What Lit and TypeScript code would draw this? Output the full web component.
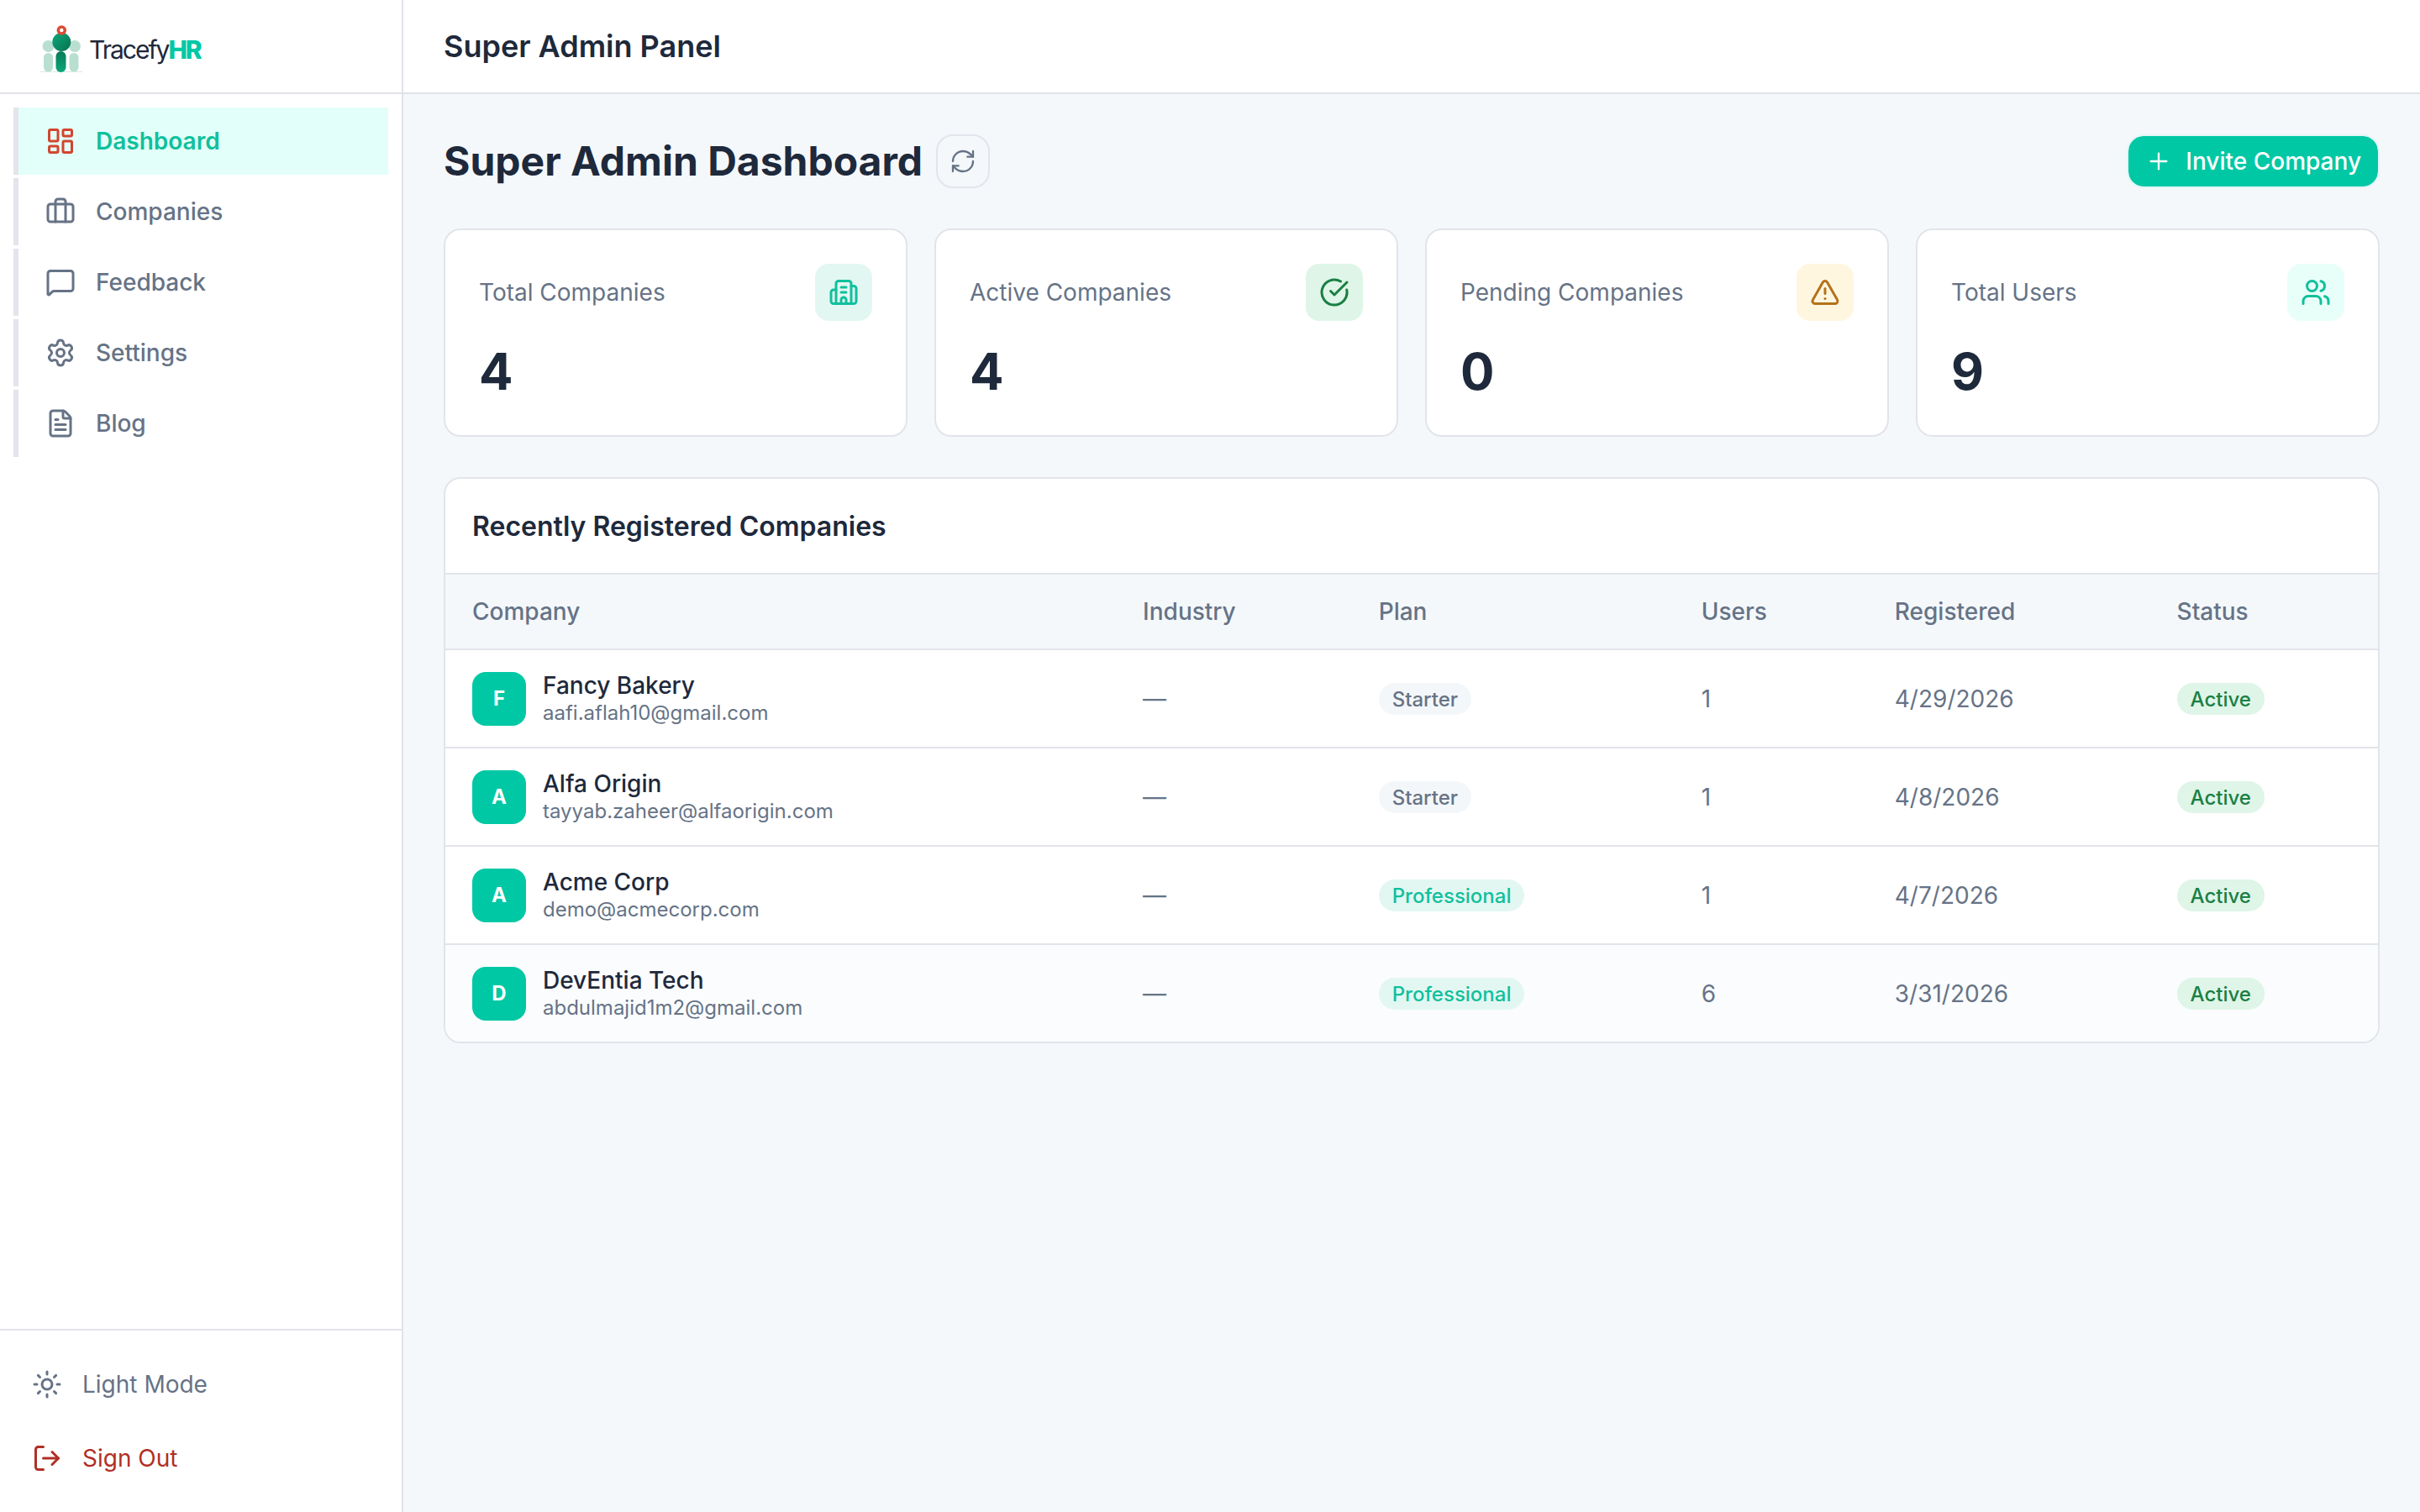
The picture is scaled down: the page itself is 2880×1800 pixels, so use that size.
import { LitElement, html, css, svg, nothing } from "lit";
import { customElement, property } from "lit/decorators.js";
import { classMap } from "lit/directives/class-map.js";

const ICONS: Record<string, unknown> = {
  dashboard: svg`<rect width="7" height="9" x="3" y="3" rx="1"/><rect width="7" height="5" x="14" y="3" rx="1"/><rect width="7" height="9" x="14" y="12" rx="1"/><rect width="7" height="5" x="3" y="16" rx="1"/>`,
  briefcase: svg`<path d="M16 20V4a2 2 0 0 0-2-2h-4a2 2 0 0 0-2 2v16"/><rect width="20" height="14" x="2" y="6" rx="2"/>`,
  message: svg`<path d="M22 17a2 2 0 0 1-2 2H6.828a2 2 0 0 0-1.414.586l-2.202 2.202A.71.71 0 0 1 2 21.286V5a2 2 0 0 1 2-2h16a2 2 0 0 1 2 2z"/>`,
  settings: svg`<path d="M9.671 4.136a2.34 2.34 0 0 1 4.659 0 2.34 2.34 0 0 0 3.319 1.915 2.34 2.34 0 0 1 2.33 4.033 2.34 2.34 0 0 0 0 3.831 2.34 2.34 0 0 1-2.33 4.033 2.34 2.34 0 0 0-3.319 1.915 2.34 2.34 0 0 1-4.659 0 2.34 2.34 0 0 0-3.32-1.915 2.34 2.34 0 0 1-2.33-4.033 2.34 2.34 0 0 0 0-3.831A2.34 2.34 0 0 1 6.35 6.051a2.34 2.34 0 0 0 3.319-1.915"/><circle cx="12" cy="12" r="3"/>`,
  file: svg`<path d="M6 22a2 2 0 0 1-2-2V4a2 2 0 0 1 2-2h8a2.4 2.4 0 0 1 1.704.706l3.588 3.588A2.4 2.4 0 0 1 20 8v12a2 2 0 0 1-2 2z"/><path d="M14 2v5a1 1 0 0 0 1 1h5"/><path d="M10 9H8"/><path d="M16 13H8"/><path d="M16 17H8"/>`,
  sun: svg`<circle cx="12" cy="12" r="4"/><path d="M12 2v2"/><path d="M12 20v2"/><path d="m4.93 4.93 1.41 1.41"/><path d="m17.66 17.66 1.41 1.41"/><path d="M2 12h2"/><path d="M20 12h2"/><path d="m6.34 17.66-1.41 1.41"/><path d="m19.07 4.93-1.41 1.41"/>`,
  logout: svg`<path d="m16 17 5-5-5-5"/><path d="M21 12H9"/><path d="M9 21H5a2 2 0 0 1-2-2V5a2 2 0 0 1 2-2h4"/>`,
  refresh: svg`<path d="M3 12a9 9 0 0 1 9-9 9.75 9.75 0 0 1 6.74 2.74L21 8"/><path d="M21 3v5h-5"/><path d="M21 12a9 9 0 0 1-9 9 9.75 9.75 0 0 1-6.74-2.74L3 16"/><path d="M8 16H3v5"/>`,
  plus: svg`<path d="M5 12h14"/><path d="M12 5v14"/>`,
  building: svg`<path d="M10 12h4"/><path d="M10 8h4"/><path d="M14 21v-3a2 2 0 0 0-4 0v3"/><path d="M6 10H4a2 2 0 0 0-2 2v7a2 2 0 0 0 2 2h16a2 2 0 0 0 2-2V9a2 2 0 0 0-2-2h-2"/><path d="M6 21V5a2 2 0 0 1 2-2h8a2 2 0 0 1 2 2v16"/>`,
  check: svg`<path d="M21.801 10A10 10 0 1 1 17 3.335"/><path d="m9 11 3 3L22 4"/>`,
  alert: svg`<path d="m21.73 18-8-14a2 2 0 0 0-3.48 0l-8 14A2 2 0 0 0 4 21h16a2 2 0 0 0 1.73-3"/><path d="M12 9v4"/><path d="M12 17h.01"/>`,
  users: svg`<path d="M16 21v-2a4 4 0 0 0-4-4H6a4 4 0 0 0-4 4v2"/><path d="M16 3.128a4 4 0 0 1 0 7.744"/><path d="M22 21v-2a4 4 0 0 0-3-3.87"/><circle cx="9" cy="7" r="4"/>`,
};

@customElement("line-icon")
export class LineIcon extends LitElement {
  @property() name = "";
  @property() weight = "2";
  static styles = css`
    :host { display: block; width: 36px; height: 36px; flex: none; }
    .glyph { display: block; width: 100%; height: 100%; }
  `;
  render() {
    return html`<svg class="glyph" viewBox="0 0 24 24" fill="none" stroke="currentColor" stroke-width=${this.weight}
      stroke-linecap="round" stroke-linejoin="round" aria-hidden="true">${ICONS[this.name] ?? nothing}</svg>`;
  }
}

const NAV = [
  { label: "Dashboard", icon: "dashboard", active: true },
  { label: "Companies", icon: "briefcase", active: false },
  { label: "Feedback", icon: "message", active: false },
  { label: "Settings", icon: "settings", active: false },
  { label: "Blog", icon: "file", active: false },
];

@customElement("side-bar")
export class SideBar extends LitElement {
  static styles = css`
    :host { display: flex; flex-direction: column; background: #fff; border-right: 2px solid #e2e2ea; }
    .brand { display: flex; align-items: center; gap: 8px; height: 112px; padding: 8px 48px 0; box-sizing: border-box;
      border-bottom: 2px solid #e2e2ea; text-decoration: none; flex: none; }
    .mark { width: 50px; height: 58px; flex: none; }
    .word { font-size: 30px; line-height: 40px; letter-spacing: -2px; color: #1e293b; }
    .accent { font-weight: 800; color: #00c8a5; }
    .nav { display: flex; flex-direction: column; gap: 4px; padding: 16px; flex: 1; }
    .link { display: flex; align-items: center; gap: 24px; height: 80px; padding: 0 32px; border-left: 6px solid #e4e4ec;
      color: #667386; font-size: 28px; font-weight: 500; text-decoration: none; }
    .active { background: #e3fff9; color: #0fc19c; font-weight: 600; }
    .active line-icon { color: #d2452f; }
    .foot { display: flex; flex-direction: column; gap: 8px; padding: 24px; border-top: 2px solid #e2e2ea; }
    .action { display: flex; align-items: center; gap: 24px; height: 80px; padding: 0 14px; border: 0; background: none;
      font: inherit; font-size: 28px; color: #667386; text-align: left; cursor: pointer; }
    .danger { color: #b02f26; }
  `;
  render() {
    return html`
      <a class="brand" href="#">
        <svg class="mark" viewBox="0 0 50 58" aria-hidden="true">
          <defs>
            <linearGradient id="body" x1="0" y1="0" x2="1" y2="1">
              <stop offset="0" stop-color="#0ea97c"/><stop offset="1" stop-color="#06704f"/>
            </linearGradient>
            <linearGradient id="limb" x1="0" y1="0" x2="0" y2="1">
              <stop offset="0" stop-color="#077a58"/><stop offset="1" stop-color="#0ca67a"/>
            </linearGradient>
          </defs>
          <g fill="#b9dfd0">
            <circle cx="9.500" cy="25" r="7"/><circle cx="41" cy="25" r="7"/>
            <rect x="4" y="33" width="11" height="22.500" rx="5.500"/><rect x="34.500" y="33" width="11" height="22.500" rx="5.500"/>
          </g>
          <rect x="0" y="55" width="50" height="1" fill="#d9e9e3"/>
          <circle cx="25.300" cy="20" r="11" fill="url(#body)"/>
          <rect x="18.500" y="31" width="12" height="25" rx="6" fill="url(#limb)"/>
          <circle cx="25.300" cy="6" r="4" fill="#fff" stroke="#dc4a33" stroke-width="3.500"/>
        </svg>
        <span class="word">Tracefy<span class="accent">HR</span></span>
      </a>
      <nav class="nav" aria-label="Main">
        ${NAV.map((n) => html`<a href="#" class=${classMap({ link: true, active: n.active })}><line-icon name=${n.icon}></line-icon>${n.label}</a>`)}
      </nav>
      <div class="foot">
        <button class="action" type="button"><line-icon name="sun"></line-icon>Light Mode</button>
        <button class="action danger" type="button"><line-icon name="logout"></line-icon>Sign Out</button>
      </div>
    `;
  }
}

@customElement("stat-card")
export class StatCard extends LitElement {
  @property() label = "";
  @property() value = "";
  @property() icon = "";
  @property() tone = "";
  static styles = css`
    :host { display: flex; flex-direction: column; gap: 24px; padding: 40px; border: 2px solid #e2e4ea; border-radius: 20px; background: #fff; }
    .top { display: flex; align-items: center; justify-content: space-between; color: #667386; font-size: 28px; }
    .tile { display: grid; place-items: center; width: 68px; height: 68px; border-radius: 16px; }
    .brand { background: #e3f7f2; color: #10c09c; }
    .success { background: #def5e8; color: #1a7f43; }
    .warning { background: #fff6e0; color: #b4721a; }
    .mint { background: #e8fff9; color: #10c09c; }
    .value { font-size: 60px; line-height: 72px; font-weight: 700; color: #1e293b; }
  `;
  render() {
    return html`
      <div class="top"><span>${this.label}</span>
        <span class=${classMap({ tile: true, [this.tone]: true })}><line-icon name=${this.icon}></line-icon></span></div>
      <div class="value">${this.value}</div>
    `;
  }
}

const COMPANIES = [
  { name: "Fancy Bakery", email: "aafi.aflah10@gmail.com", plan: "Starter", users: 1, date: "4/29/2026" },
  { name: "Alfa Origin", email: "tayyab.zaheer@alfaorigin.com", plan: "Starter", users: 1, date: "4/8/2026" },
  { name: "Acme Corp", email: "demo@acmecorp.com", plan: "Professional", users: 1, date: "4/7/2026" },
  { name: "DevEntia Tech", email: "abdulmajid1m2@gmail.com", plan: "Professional", users: 6, date: "3/31/2026", hover: true },
];

@customElement("company-table")
export class CompanyTable extends LitElement {
  static styles = css`
    :host { display: block; border: 2px solid #e2e4ea; border-radius: 20px; background: #fff; overflow: hidden; }
    .title { margin: 0; padding: 2px 32px 0; font-size: 32px; line-height: 110px; font-weight: 600; color: #1e293b; }
    .table { width: 100%; table-layout: fixed; border-collapse: separate; border-spacing: 0; font-size: 28px; color: #667386; }
    .c-company { width: 34.7%; }
    .c-industry { width: 12.2%; }
    .c-plan { width: 16.7%; }
    .c-users { width: 10%; }
    .c-date { width: 14.6%; }
    .head { height: 90px; padding: 0 32px; box-sizing: border-box; text-align: left; font-weight: 500; background: #f4f8fb;
      border-top: 2px solid #e2e4ea; }
    .cell { height: 117px; padding: 0 32px; box-sizing: border-box; border-top: 2px solid #e2e4ea; }
    .hover .cell { background: #fafcfd; }
    .who { display: flex; align-items: center; gap: 20px; }
    .avatar { display: grid; place-items: center; width: 64px; height: 64px; border-radius: 16px; background: #00c8a5;
      color: #fff; font-size: 24px; font-weight: 700; flex: none; }
    .name { font-weight: 500; line-height: 34px; color: #1e293b; }
    .email { font-size: 24px; line-height: 32px; }
    .badge { display: inline-block; padding: 2px 16px 0; border-radius: 19px; font-size: 24px; line-height: 36px; font-weight: 500;
      vertical-align: middle; background: #f4f7fa; }
    .pro { background: #e3f7f2; color: #10c09c; }
    .ok { background: #def5e8; color: #1a7f43; }
  `;
  render() {
    return html`
      <h2 class="title">Recently Registered Companies</h2>
      <table class="table">
        <colgroup><col class="c-company"><col class="c-industry"><col class="c-plan"><col class="c-users"><col class="c-date"><col></colgroup>
        <thead><tr>${["Company", "Industry", "Plan", "Users", "Registered", "Status"].map((h) => html`<th class="head" scope="col">${h}</th>`)}</tr></thead>
        <tbody>
          ${COMPANIES.map((c) => html`<tr class=${classMap({ hover: !!c.hover })}>
            <td class="cell"><div class="who"><span class="avatar">${c.name[0]}</span>
              <div><div class="name">${c.name}</div><div class="email">${c.email}</div></div></div></td>
            <td class="cell">—</td>
            <td class="cell"><span class=${classMap({ badge: true, pro: c.plan === "Professional" })}>${c.plan}</span></td>
            <td class="cell">${c.users}</td>
            <td class="cell">${c.date}</td>
            <td class="cell"><span class="badge ok">Active</span></td>
          </tr>`)}
        </tbody>
      </table>
    `;
  }
}

@customElement("app-root")
export class AppRoot extends LitElement {
  static styles = css`
    :host { display: grid; grid-template-columns: 480px minmax(0, 1fr); min-height: 100vh; background: #f4f8fb;
      font-family: Inter, "Liberation Sans", sans-serif; }
    .bar { display: flex; align-items: center; height: 110px; padding: 0 48px; border-bottom: 2px solid #e2e2ea; background: #fff;
      font-size: 36px; font-weight: 600; color: #1e293b; }
    .content { display: flex; flex-direction: column; gap: 48px; padding: 48px; }
    .heading { display: flex; align-items: center; gap: 16px; }
    .title { margin: 0; font-size: 48px; line-height: 64px; font-weight: 700; color: #1e293b; }
    .refresh { display: grid; place-items: center; width: 64px; height: 64px; padding: 0; border: 2px solid #e2e6ec; border-radius: 20px;
      background: none; color: #667386; cursor: pointer; }
    .invite { display: flex; align-items: center; gap: 16px; height: 64px; margin-left: auto; padding: 0 20px; border: 2px solid #e4f5f6;
      border-radius: 20px; background: #00c8a5; background-clip: padding-box; color: #fff; font: inherit; font-size: 28px;
      font-weight: 500; cursor: pointer; }
    .refresh line-icon, .invite line-icon { width: 32px; height: 32px; }
    .stats { display: grid; grid-template-columns: repeat(4, minmax(0, 1fr)); gap: 32px; }
  `;
  render() {
    return html`
      <side-bar></side-bar>
      <div>
        <header class="bar">Super Admin Panel</header>
        <main class="content">
          <div class="heading">
            <h1 class="title">Super Admin Dashboard</h1>
            <button class="refresh" type="button" aria-label="Refresh"><line-icon name="refresh" weight="1.75"></line-icon></button>
            <button class="invite" type="button"><line-icon name="plus" weight="1.75"></line-icon>Invite Company</button>
          </div>
          <section class="stats">
            <stat-card label="Total Companies" value="4" icon="building" tone="brand"></stat-card>
            <stat-card label="Active Companies" value="4" icon="check" tone="success"></stat-card>
            <stat-card label="Pending Companies" value="0" icon="alert" tone="warning"></stat-card>
            <stat-card label="Total Users" value="9" icon="users" tone="mint"></stat-card>
          </section>
          <company-table></company-table>
        </main>
      </div>
    `;
  }
}
